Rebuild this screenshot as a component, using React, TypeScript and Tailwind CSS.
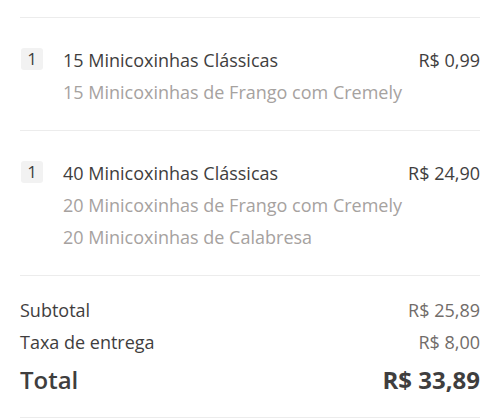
import { FC } from "react";

type Item = { qty: number; name: string; price: string; details: string[] };

const items: Item[] = [
  {
    qty: 1,
    name: "15 Minicoxinhas Clássicas",
    price: "R$ 0,99",
    details: ["15 Minicoxinhas de Frango com Cremely"],
  },
  {
    qty: 1,
    name: "40 Minicoxinhas Clássicas",
    price: "R$ 24,90",
    details: ["20 Minicoxinhas de Frango com Cremely", "20 Minicoxinhas de Calabresa"],
  },
];

const OrderItem: FC<{ item: Item }> = ({ item }) => (
  <div className="flex border-b border-[#ececec] pt-[26px] pb-[22px]">
    <div className="w-[43px] shrink-0 pt-[4px] pl-px">
      <span className="flex h-[22px] w-[22px] items-center justify-center rounded-[3px] bg-[#f2f2f2] text-[17px] font-medium text-[#3f3e3e]">
        {item.qty}
      </span>
    </div>
    <div className="flex-1">
      <div className="flex justify-between text-[18px] leading-[32px] text-[#3f3e3e]">
        <span>{item.name}</span>
        <span>{item.price}</span>
      </div>
      {item.details.map((d) => (
        <div key={d} className="text-[18px] leading-[32px] text-[#a6a29f]">
          {d}
        </div>
      ))}
    </div>
  </div>
);

export default function App() {
  return (
    <div className="h-[420px] overflow-hidden bg-white px-5 font-['Open_Sans',sans-serif]">
      <div className="mt-[17px] border-t border-[#ececec]">
        {items.map((it) => (
          <OrderItem key={it.name} item={it} />
        ))}
        <div className="border-b border-[#ececec] pt-[18px] pb-[17px]">
          <div className="flex justify-between text-[18px] leading-[32px] text-[#3f3e3e]">
            <span>Subtotal</span>
            <span className="text-[#716c69]">R$ 25,89</span>
          </div>
          <div className="flex justify-between text-[18px] leading-[32px] text-[#3f3e3e]">
            <span>Taxa de entrega</span>
            <span className="text-[#716c69]">R$ 8,00</span>
          </div>
          <div className="mt-[2px] flex justify-between text-[24px] font-semibold leading-[40px] text-[#3f3e3e]">
            <span>Total</span>
            <span className="font-bold">R$ 33,89</span>
          </div>
        </div>
      </div>
    </div>
  );
}
